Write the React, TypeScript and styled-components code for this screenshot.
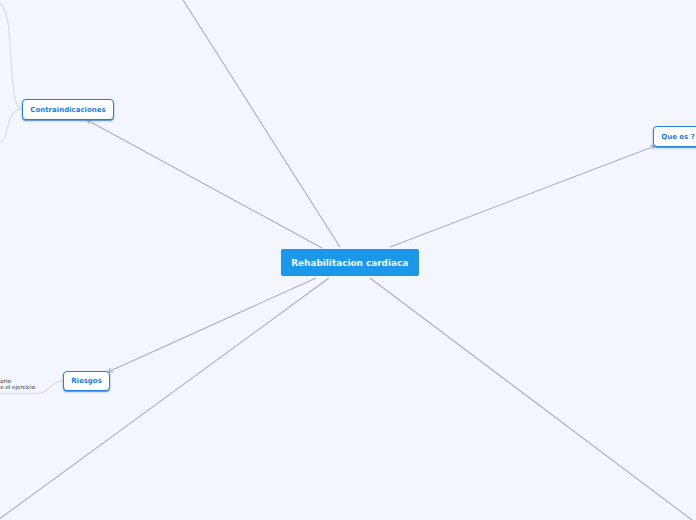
import React from "react";
import styled, { createGlobalStyle } from "styled-components";

const Global = createGlobalStyle`
  html, body { margin: 0; padding: 0; background: #f3f6fe; }
  body { width: 696px; height: 520px; overflow: hidden; font-family: "DejaVu Sans", sans-serif; }
`;

const Canvas = styled.div`
  position: relative;
  width: 696px;
  height: 520px;
  overflow: hidden;
  background: #f3f6fe;
`;

const Wires = styled.svg`
  position: absolute;
  inset: 0;
`;

const Topic = styled.div<{ $x: number; $y: number; $w: number; $h: number }>`
  position: absolute;
  left: ${(p) => p.$x}px;
  top: ${(p) => p.$y}px;
  width: ${(p) => p.$w}px;
  height: ${(p) => p.$h}px;
  box-sizing: border-box;
  display: flex;
  align-items: center;
  justify-content: center;
  background: #fff;
  border: 1.5px solid #2380e2;
  border-radius: 4px;
  box-shadow: 0 1px 1.5px #4a86c8;
  color: #1a7ce6;
  font-size: 7px;
  font-weight: 700;
  white-space: nowrap;
`;

const CentralTopic = styled.div`
  position: absolute;
  left: 281px;
  top: 249px;
  width: 137.500px;
  height: 27px;
  display: flex;
  align-items: center;
  justify-content: center;
  background: #1b98ea;
  border-radius: 2px;
  color: #f5f9fe;
  font-size: 8.900px;
  font-weight: 700;
  white-space: nowrap;
`;

const Note = styled.div`
  position: absolute;
  right: 661px;
  top: 378px;
  color: #2c2c34;
  font-size: 5.500px;
  line-height: 6px;
  white-space: nowrap;
  text-align: left;
`;

const NoteLine = styled.div``;

const Arrow = ({ d }: { d: string }) => <path d={d} fill="none" stroke="#abaeb6" strokeWidth="1.1" />;
const Branch = ({ d }: { d: string }) => <path d={d} fill="none" stroke="#d6d8df" strokeWidth="1.1" />;

export default function App() {
  return (
    <Canvas>
      <Global />
      <Wires width="696" height="520" viewBox="0 0 696 520">
        <Arrow d="M340 247 L183 0" />
        <Arrow d="M322 248 L87 120 M87 120 L92 120 M87 120 L89.500 124" />
        <Arrow d="M390 247 L655 146 M655 146 L650 145.500 M655 146 L652 149.500" />
        <Arrow d="M316 278 L108 372 M108 372 L113 372 M108 372 L110.500 368" />
        <Arrow d="M329 278 L0 518.500" />
        <Arrow d="M370 278 L692 520" />
        <Branch d="M22 109 C14 108 13 88 11 60 C9 30 9 12 0 3" />
        <Branch d="M22 109 C12 109 9 120 7 130 C6 137 3 141 0 142" />
        <Branch d="M63 381 C50 381 50 393.500 38 393.500 L0 393.500" />
      </Wires>
      <CentralTopic>Rehabilitacion cardiaca</CentralTopic>
      <Topic $x={22} $y={99} $w={92} $h={21}>Contraindicaciones</Topic>
      <Topic $x={653} $y={126} $w={50} $h={21}>Que es ?</Topic>
      <Topic $x={63} $y={371} $w={47} $h={20}>Riesgos</Topic>
      <Note>
        <NoteLine>orio</NoteLine>
        <NoteLine>e el ejercicio</NoteLine>
      </Note>
    </Canvas>
  );
}
